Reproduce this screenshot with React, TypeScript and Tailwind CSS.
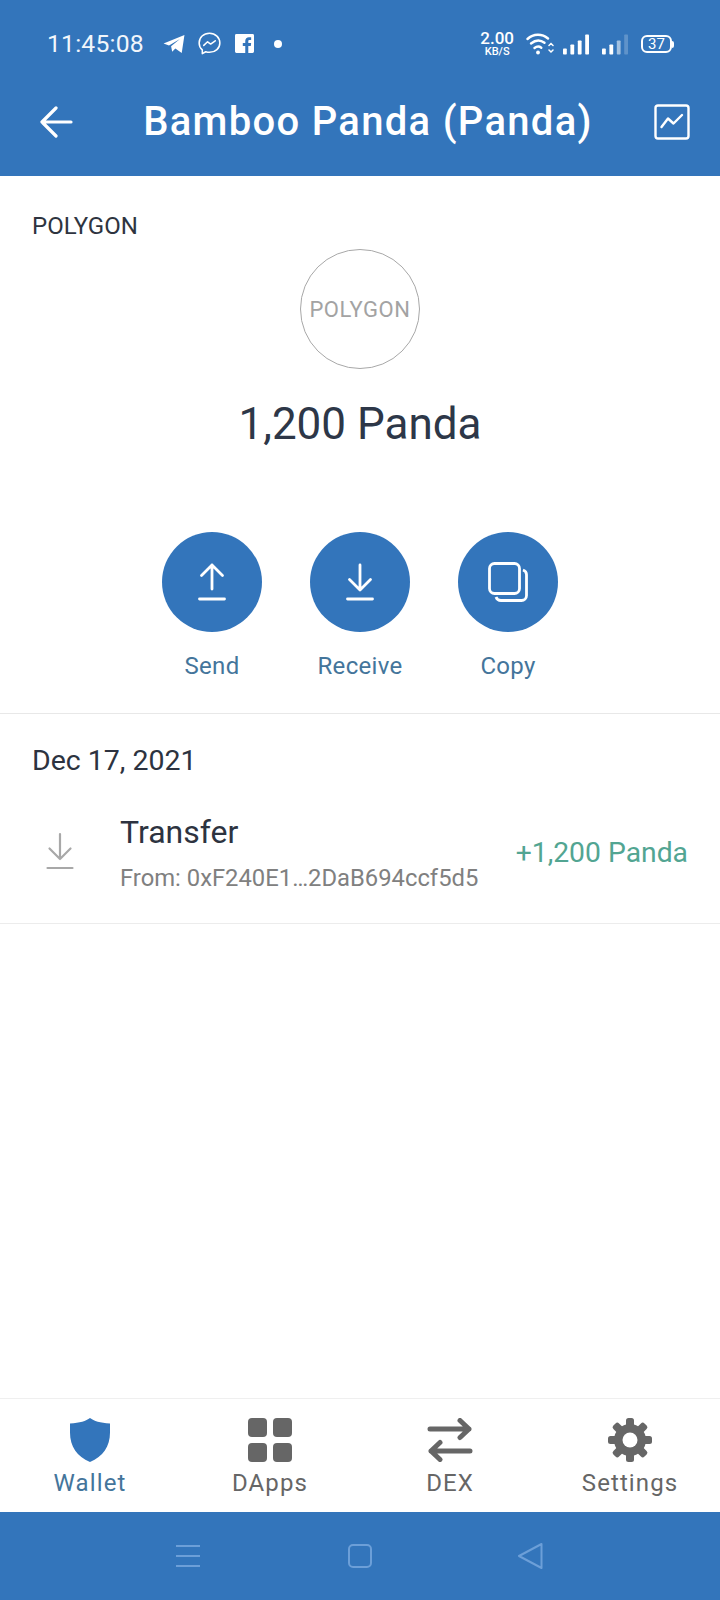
import React from "react";

const F = { fontFamily: "Roboto, sans-serif" };

function Telegram() {
  return (
    <svg width="22" height="20" viewBox="0 0 24 22" fill="#fff"><path d="M0.5 10.5 L23.5 1 L20.5 21 L13.5 16 L10 19.5 L8.8 13.5 L18.5 5.5 L6.5 12.7 Z" /></svg>
  );
}
function Messenger() {
  return (
    <svg width="23" height="23" viewBox="0 0 24 24" fill="none" stroke="#fff" strokeWidth="1.6" strokeLinejoin="round" strokeLinecap="round">
      <path d="M12 1.2C5.8 1.2 1.2 5.6 1.2 11.4c0 3 1.2 5.5 3.3 7.3v3.9l3.6-2c1.2.4 2.5.6 3.9.6 6.2 0 10.8-4.4 10.8-9.8S18.2 1.2 12 1.2Z" />
      <path d="M6 14l4-3.8 3.2 2.4L18 9.2" />
    </svg>
  );
}
function Facebook() {
  return (
    <svg width="19" height="19" viewBox="0 0 20 20"><path fill="#fff" d="M1.5 0h17A1.5 1.5 0 0 1 20 1.5v17a1.5 1.5 0 0 1-1.5 1.5H14v-7.5h2.6l.4-3H14V7.6c0-.9.3-1.4 1.5-1.4H17V3.5c-.4 0-1.3-.1-2.3-.1-2.3 0-3.9 1.4-3.9 3.9v2.2H8.2v3h2.6V20H1.5A1.5 1.5 0 0 1 0 18.5v-17A1.5 1.5 0 0 1 1.5 0Z" /></svg>
  );
}
function Wifi() {
  return (
    <svg width="28" height="22" viewBox="0 0 28 22" fill="none" stroke="#fff" strokeWidth="2.4" strokeLinecap="round">
      <path d="M1.500 6C7.500 .5 16 .5 22 5.500" />
      <path d="M5 10.500c4.500-3.800 9.500-3.800 13.500-.8" />
      <path d="M8.500 15c2.300-1.800 4.800-1.800 6.800-.3" />
      <circle cx="12" cy="19.500" r="1.900" fill="#fff" stroke="none" />
      <path d="M23 12.500l2-2 2 2M23 17l2 2 2-2" strokeWidth="1.500" />
    </svg>
  );
}
function Signal({ dim }: { dim?: boolean }) {
  const bars = [6, 10, 14, 20];
  return (
    <svg width="26" height="21" viewBox="0 0 26 21" fill="#fff">
      {bars.map((h, i) => (
        <rect key={i} x={i * 7.4} y={20.500 - h} width="3.800" height={h} rx="0.800" opacity={dim && i >= 2 ? (i === 2 ? 0.55 : 0.22) : 1} />
      ))}
    </svg>
  );
}
function Up() {
  return (
    <svg width="28" height="38" viewBox="0 0 28 38" fill="none" stroke="#fff" strokeWidth="2.800" strokeLinecap="round" strokeLinejoin="round">
      <path d="M14 26V2M3.500 12.500 14 2l10.500 10.500" />
      <path d="M1.500 36h25" />
    </svg>
  );
}
function Down({ color = "#fff", w = 2.8 }: { color?: string; w?: number }) {
  return (
    <svg width="28" height="38" viewBox="0 0 28 38" fill="none" stroke={color} strokeWidth={w} strokeLinecap="round" strokeLinejoin="round">
      <path d="M14 2v25M3.500 16.500 14 27l10.500-10.500" />
      <path d="M1.500 36h25" />
    </svg>
  );
}
function Copy() {
  return (
    <svg width="40" height="40" viewBox="0 0 40 40" fill="none" stroke="#fff" strokeWidth="2.800" strokeLinejoin="round">
      <rect x="1.500" y="1.500" width="30" height="30" rx="5" />
      <path d="M35 8c2 .7 3.500 2.500 3.500 4.700v20.800a5 5 0 0 1-5 5H13c-2.300 0-4.300-1.500-5-3.500" />
    </svg>
  );
}
function Gear() {
  return (
    <svg width="44" height="44" viewBox="0 0 44 44">
      {[0, 45, 90, 135, 180, 225, 270, 315].map((a) => (
        <rect key={a} x="18" y="0" width="8" height="12" rx="2.500" fill="#666" transform={`rotate(${a} 22 22)`} />
      ))}
      <circle cx="22" cy="22" r="16" fill="#666" />
      <circle cx="22" cy="22" r="7.500" fill="#fff" />
    </svg>
  );
}

function Action({ label, icon }: { label: string; icon: React.ReactNode }) {
  return (
    <div className="flex w-[100px] flex-col items-center">
      <div className="flex h-[100px] w-[100px] items-center justify-center rounded-full bg-[#3375bb]">{icon}</div>
      <span className="mt-[20px] text-[24px] leading-[28px] tracking-[0.3px] text-[#44759b]">{label}</span>
    </div>
  );
}

function Tab({ label, icon, active }: { label: string; icon: React.ReactNode; active?: boolean }) {
  return (
    <div className="flex flex-1 flex-col items-center pt-[18px]">
      <div className="flex h-[46px] items-center justify-center">{icon}</div>
      <span className={`mt-[6px] text-[24px] leading-[28px] tracking-[1.1px] ${active ? "text-[#44759b]" : "text-[#666666]"}`}>{label}</span>
    </div>
  );
}

export default function App() {
  return (
    <div className="flex h-[1600px] w-[720px] flex-col overflow-hidden bg-white" style={F}>
      <header className="h-[176px] shrink-0 bg-[#3375bb] text-white">
        <div className="flex h-[88px] items-center justify-between pl-[47px] pr-[46px]">
          <div className="flex items-center">
            <span className="text-[24.700px] leading-none tracking-[0.2px] text-[#f1f6fb]">11:45:08</span>
            <span className="ml-[19px] flex"><Telegram /></span>
            <span className="ml-[13px] flex"><Messenger /></span>
            <span className="ml-[14px] flex"><Facebook /></span>
            <span className="ml-[20px] h-2 w-2 rounded-full bg-white" />
          </div>
          <div className="flex items-center">
            <div className="flex flex-col items-center font-medium">
              <span className="text-[17px] leading-[15px]">2.00</span>
              <span className="text-[11px] leading-[12px]">KB/S</span>
            </div>
            <span className="ml-[12px] flex"><Wifi /></span>
            <span className="ml-[9px] flex"><Signal /></span>
            <span className="ml-[13px] flex"><Signal dim /></span>
            <span className="relative ml-[13px] mr-[2px] flex h-[18px] w-[31px] items-center justify-center rounded-[6px] border-2 border-white text-[15px] leading-none">
              37
              <span className="absolute right-[-4px] h-[7px] w-[2px] rounded-r-sm bg-white" />
            </span>
          </div>
        </div>
        <div className="flex h-[68px] items-center justify-between pl-[39px] pr-[30px]">
          <svg width="34" height="32" viewBox="0 0 34 32" fill="none" stroke="#fff" strokeWidth="3.200" strokeLinecap="round" strokeLinejoin="round">
            <path d="M32 16H3M17 2 3 16l14 14" />
          </svg>
          <h1 className="ml-[9px] text-[40px] font-medium leading-none tracking-[1.3px]">Bamboo Panda (Panda)</h1>
          <svg width="36" height="36" viewBox="0 0 36 36" fill="none" stroke="#fff" strokeWidth="2.400" strokeLinejoin="round" strokeLinecap="round">
            <rect x="1.500" y="1.500" width="33" height="33" rx="2.500" />
            <path d="M7.500 23 14 14.500l5.500 5L28 11" />
          </svg>
        </div>
      </header>

      <main className="flex flex-1 flex-col">
        <div className="flex h-[538px] flex-col border-b border-[#e8e8e8]">
          <p className="mt-[36px] pl-[32px] text-[24px] leading-[28px] text-[#2e3440]">POLYGON</p>
          <div className="mt-[9px] flex h-[120px] w-[120px] items-center justify-center self-center rounded-full border border-[#a8a8a8] text-[22px] tracking-[0.6px] text-[#a3a3a3]">POLYGON</div>
          <p className="mt-[28px] text-center text-[44px] leading-[54px] text-[#2d3748]">1,200 Panda</p>
          <div className="mt-[81px] flex justify-center gap-[48px]">
            <Action label="Send" icon={<Up />} />
            <Action label="Receive" icon={<Down />} />
            <Action label="Copy" icon={<Copy />} />
          </div>
        </div>
        <div className="h-[210px] border-b border-[#ececec]">
          <p className="mt-[31px] pl-[32px] text-[28.500px] leading-[32px] text-[#2d3340]">Dec 17, 2021</p>
          <div className="mt-[37px] flex items-center pl-[46px] pr-[32px]">
            <div className="mb-[4px] flex"><Down color="#a8a8a8" w={2.200} /></div>
            <div className="ml-[46px] flex-1">
              <p className="text-[32px] leading-[36px] text-[#2d3340]">Transfer</p>
              <p className="mt-[14px] text-[23.800px] leading-[28px] text-[#808080]">From: 0xF240E1…2DaB694ccf5d5</p>
            </div>
            <span className="text-[28.300px] leading-[32px] text-[#52a592]">+1,200 Panda</span>
          </div>
        </div>
      </main>

      <nav className="flex h-[114px] shrink-0 border-t border-[#efefef]">
        <Tab active label="Wallet" icon={
          <svg width="40" height="44" viewBox="0 0 40 44" fill="#3375bb"><path d="M20 0c4 3 10 5 20 5.500 0 2 0 5 0 9 0 14-7 24-20 29.500C7 38.500 0 28.500 0 14.500c0-4 0-7 0-9C10 5 16 3 20 0Z" /></svg>
        } />
        <Tab label="DApps" icon={
          <div className="grid grid-cols-2 gap-[6px]">
            <span className="h-[19px] w-[19px] rounded-[4px] bg-[#666]" />
            <span className="h-[19px] w-[19px] rounded-[4px] bg-[#666]" />
            <span className="h-[19px] w-[19px] rounded-[4px] bg-[#666]" />
            <span className="h-[19px] w-[19px] rounded-[4px] bg-[#666]" />
          </div>
        } />
        <Tab label="DEX" icon={
          <svg width="46" height="44" viewBox="0 0 46 44" fill="none" stroke="#666" strokeWidth="5" strokeLinecap="round" strokeLinejoin="round">
            <path d="M3 11h39M33 2.500 42 11l-9 8.500" />
            <path d="M43 33H4M13 24.500 4 33l9 8.500" />
          </svg>
        } />
        <Tab label="Settings" icon={<Gear />} />
      </nav>

      <footer className="flex h-[88px] shrink-0 items-center bg-[#3375bb] pl-[176px]">
        <svg width="24" height="24" viewBox="0 0 24 24" fill="none" stroke="#6c9fd8" strokeWidth="2"><path d="M0 2h24M0 12h24M0 22h24" /></svg>
        <svg className="ml-[148px]" width="24" height="24" viewBox="0 0 24 24" fill="none" stroke="#6c9fd8" strokeWidth="2"><rect x="1" y="1" width="22" height="22" rx="4" /></svg>
        <svg className="ml-[145px]" width="26" height="28" viewBox="0 0 26 28" fill="none" stroke="#6c9fd8" strokeWidth="2" strokeLinejoin="round"><path d="M24.500 2 2 14l22.500 12Z" /></svg>
      </footer>
    </div>
  );
}
